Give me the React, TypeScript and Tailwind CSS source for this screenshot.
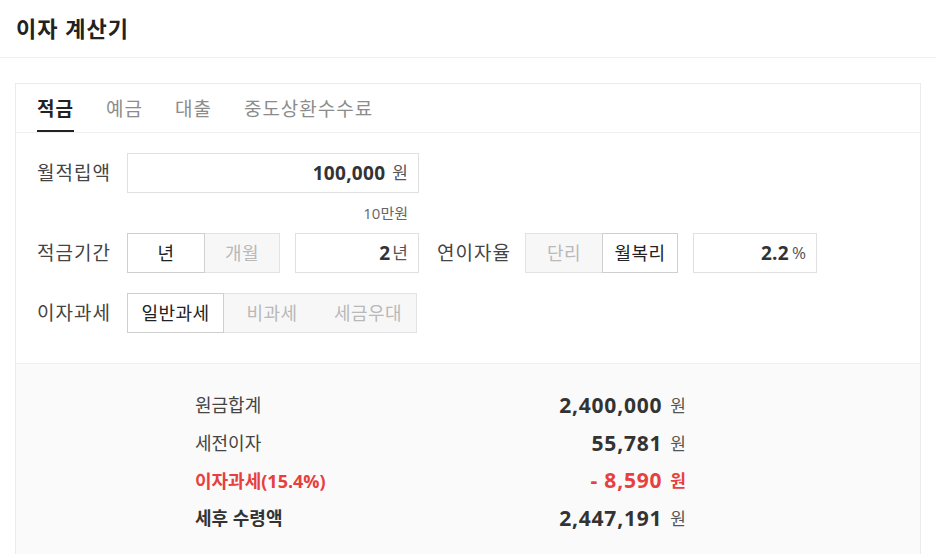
import { useState } from 'react';

const font = { fontFamily: '"Open Sans", "Noto Sans CJK KR", sans-serif' };

type ToggleProps = {
  options: { label: string; width: string }[];
  active: number;
  onChange: (index: number) => void;
};

const Toggle = ({ options, active, onChange }: ToggleProps) => (
  <div className="flex h-10">
    {options.map((option, index) => (
      <button
        key={option.label}
        onClick={() => onChange(index)}
        className={`${option.width} h-10 text-[18px] leading-none tracking-[0.5px] ${
          index === active
            ? 'relative z-10 border border-[#cfcfcf] bg-white text-[#222]'
            : 'border-y border-[#e3e3e3] bg-[#f7f7f8] text-[#b9b9b9]'
        } ${index === 0 && index !== active ? 'border-l' : ''} ${
          index === options.length - 1 && index !== active ? 'border-r' : ''
        }`}
      >
        {option.label}
      </button>
    ))}
  </div>
);

const ValueBox = ({ value, unit, width, unitClass }: { value: string; unit: string; width: string; unitClass?: string }) => (
  <div className={`${width} flex h-10 items-center justify-end border border-[#e0e0e0] bg-white pr-[10px]`}>
    <span className="text-[19px] font-bold tracking-[0.3px] text-[#333]">{value}</span>
    <span className={unitClass ?? 'ml-[7px] text-[17px] text-[#555]'}>{unit}</span>
  </div>
);

const ResultRow = ({
  label,
  value,
  tone = 'normal',
}: {
  label: string;
  value: string;
  tone?: 'normal' | 'red' | 'strong';
}) => (
  <div className="flex h-[37.7px] items-center justify-between">
    <span
      className={`text-[18px] ${
        tone === 'red' ? 'font-bold text-[#e6403f]' : tone === 'strong' ? 'font-bold text-[#333]' : 'text-[#444]'
      }`}
    >
      {label}
    </span>
    <span className="flex items-center">
      <span className={`text-[21px] font-bold tracking-[0.8px] ${tone === 'red' ? 'text-[#e6403f]' : 'text-[#333]'}`}>
        {value}
      </span>
      <span className={`ml-[8px] text-[17px] ${tone === 'red' ? 'font-bold text-[#e6403f]' : 'text-[#555]'}`}>원</span>
    </span>
  </div>
);

export default function App() {
  const [tab, setTab] = useState(0);
  const [period, setPeriod] = useState(0);
  const [rateType, setRateType] = useState(1);
  const [tax, setTax] = useState(0);
  const tabs = ['적금', '예금', '대출', '중도상환수수료'];

  return (
    <div className="min-h-screen bg-white text-[#333]" style={font}>
      <header className="flex h-[58px] items-center border-b border-[#efefef] px-4">
        <h1 className="text-[22px] font-bold tracking-[1px] text-[#222]">이자 계산기</h1>
      </header>

      <div className="px-[15px] pt-[25px]">
        <section className="border border-[#ebebeb] bg-white">
          <nav className="flex h-[49px] gap-[32px] border-b border-[#efefef] px-[21px]">
            {tabs.map((label, index) => (
              <button
                key={label}
                onClick={() => setTab(index)}
                className={`relative h-full pt-[2px] text-[19px] tracking-[1px] ${
                  index === tab ? 'font-bold text-[#222]' : 'text-[#8c8c8c]'
                }`}
              >
                {label}
                {index === tab && <span className="absolute bottom-0 left-0 right-0 h-[2px] bg-[#222]" />}
              </button>
            ))}
          </nav>

          <div className="px-[21px] pb-[30px] pt-[20px]">
            <div className="flex items-center">
              <span className="w-[90px] text-[19px] tracking-[1px] text-[#444]">월적립액</span>
              <ValueBox value="100,000" unit="원" width="w-[292px]" />
            </div>
            <div className="flex h-[40px] w-[382px] items-center justify-end pr-[11px] text-[15px] text-[#666]">10만원</div>

            <div className="flex items-center">
              <span className="w-[90px] text-[19px] tracking-[1px] text-[#444]">적금기간</span>
              <Toggle
                options={[
                  { label: '년', width: 'w-[78px]' },
                  { label: '개월', width: 'w-[75px]' },
                ]}
                active={period}
                onChange={setPeriod}
              />
              <div className="ml-[15px]">
                <ValueBox value="2" unit="년" width="w-[124px]" unitClass="ml-[2px] text-[17px] text-[#555]" />
              </div>
              <span className="ml-[18px] w-[88px] text-[19px] tracking-[1px] text-[#444]">연이자율</span>
              <Toggle
                options={[
                  { label: '단리', width: 'w-[77px]' },
                  { label: '월복리', width: 'w-[76px]' },
                ]}
                active={rateType}
                onChange={setRateType}
              />
              <div className="ml-[15px]">
                <ValueBox value="2.2" unit="%" width="w-[124px]" unitClass="ml-[3px] text-[17px] text-[#555]" />
              </div>
            </div>

            <div className="mt-[20px] flex items-center">
              <span className="w-[90px] text-[19px] tracking-[1px] text-[#444]">이자과세</span>
              <Toggle
                options={[
                  { label: '일반과세', width: 'w-[97px]' },
                  { label: '비과세', width: 'w-[96px]' },
                  { label: '세금우대', width: 'w-[97px]' },
                ]}
                active={tax}
                onChange={setTax}
              />
            </div>
          </div>

          <div className="border-t border-[#efefef] bg-[#fafafa] pb-[40px] pt-[23px]">
            <div className="ml-[179px] w-[491px]">
              <ResultRow label="원금합계" value="2,400,000" />
              <ResultRow label="세전이자" value="55,781" />
              <ResultRow label="이자과세(15.4%)" value="- 8,590" tone="red" />
              <ResultRow label="세후 수령액" value="2,447,191" tone="strong" />
            </div>
          </div>
        </section>
      </div>
    </div>
  );
}
